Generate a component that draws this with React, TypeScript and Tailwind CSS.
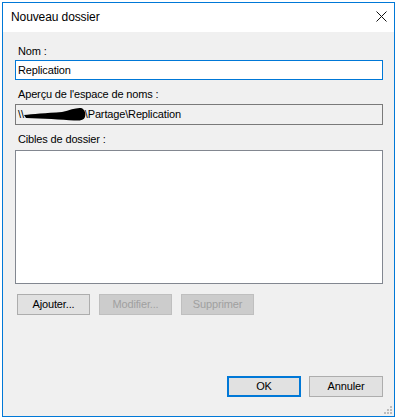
import React from "react";

const font = { fontFamily: '"Liberation Sans", Arial, sans-serif' };

function WinButton({
  label,
  disabled,
  primary,
  className = "",
}: {
  label: string;
  disabled?: boolean;
  primary?: boolean;
  className?: string;
}) {
  let look = "border border-[#adadad] bg-[#e1e1e1] text-black";
  if (disabled) look = "border border-[#bfbfbf] bg-[#cccccc] text-[#a0a0a0]";
  if (primary) look = "border-2 border-[#0078d7] bg-[#e1e1e1] text-black";
  return (
    <button
      disabled={disabled}
      className={`h-[21px] w-[73px] flex items-center justify-center text-[11px] leading-[13px] tracking-[-0.15px] ${look} ${className}`}
    >
      {label}
    </button>
  );
}

export default function App() {
  return (
    <div className="w-[397px] h-[419px] bg-white pl-[2px] pt-[2px]" style={font}>
      <div className="relative w-[393px] h-[415px] border border-[#0078d7] flex flex-col">
        {/* Title bar */}
        <div className="h-[29px] bg-white flex justify-between pl-[8px] pr-[7px]">
          <span className="pt-[7px] text-[12px] leading-[14px] tracking-[-0.1px] text-black">Nouveau dossier</span>
          <svg width="11" height="11" viewBox="0 0 11 11" className="mt-[8px]">
            <path d="M0.5 0.5 L10.5 10.5 M10.5 0.5 L0.5 10.5" stroke="#111" strokeWidth="1" />
          </svg>
        </div>

        {/* Body */}
        <div className="flex-1 bg-[#f0f0f0] flex flex-col pl-[12px] pt-[13px] pb-[19px] pr-[11px] text-[11px] leading-[13px] tracking-[-0.15px] text-black">
          <div className="pl-[3px]">Nom :</div>
          <div className="mt-[2px] w-[368px] h-[20px] border border-[#0078d7] bg-white flex items-center pl-[2px]">
            Replication
          </div>

          <div className="mt-[8px] pl-[3px]">Aperçu de l'espace de noms :</div>
          <div className="mt-[3px] w-[368px] h-[21px] border border-[#7a7a7a] bg-[#f0f0f0] flex items-center pl-[2px]">
            <span>\\</span>
            <svg width="62" height="15" viewBox="0 0 62 15" className="relative -mr-[1px]">
              <path
                d="M0 8 C8 7 22 6 38 5 C46 3 52 0.5 57 1 C61 2 62 7 61 10 C60 13 56 14 50 13.5 C38 12.5 18 11.5 2 11 Z"
                fill="#000"
              />
            </svg>
            <span>\Partage\Replication</span>
          </div>

          <div className="mt-[8px] pl-[3px]">Cibles de dossier :</div>
          <div className="mt-[4px] w-[368px] h-[134px] border border-[#828790] bg-white" />

          <div className="mt-[10px] ml-[2px] flex gap-[9px]">
            <WinButton label="Ajouter..." />
            <WinButton label="Modifier..." disabled />
            <WinButton label="Supprimer" disabled />
          </div>

          <div className="mt-auto flex justify-end gap-[8px]">
            <WinButton label="OK" primary className="w-[74px]" />
            <WinButton label="Annuler" className="w-[74px]" />
          </div>
        </div>

        {/* Size grip */}
        <svg width="9" height="9" viewBox="0 0 9 9" className="absolute right-[1px] bottom-[1px]">
          <rect x="6" y="0" width="2" height="2" fill="#bcbcbc" />
          <rect x="3" y="3" width="2" height="2" fill="#bcbcbc" />
          <rect x="6" y="3" width="2" height="2" fill="#bcbcbc" />
          <rect x="0" y="6" width="2" height="2" fill="#bcbcbc" />
          <rect x="3" y="6" width="2" height="2" fill="#bcbcbc" />
          <rect x="6" y="6" width="2" height="2" fill="#bcbcbc" />
        </svg>
      </div>
    </div>
  );
}
